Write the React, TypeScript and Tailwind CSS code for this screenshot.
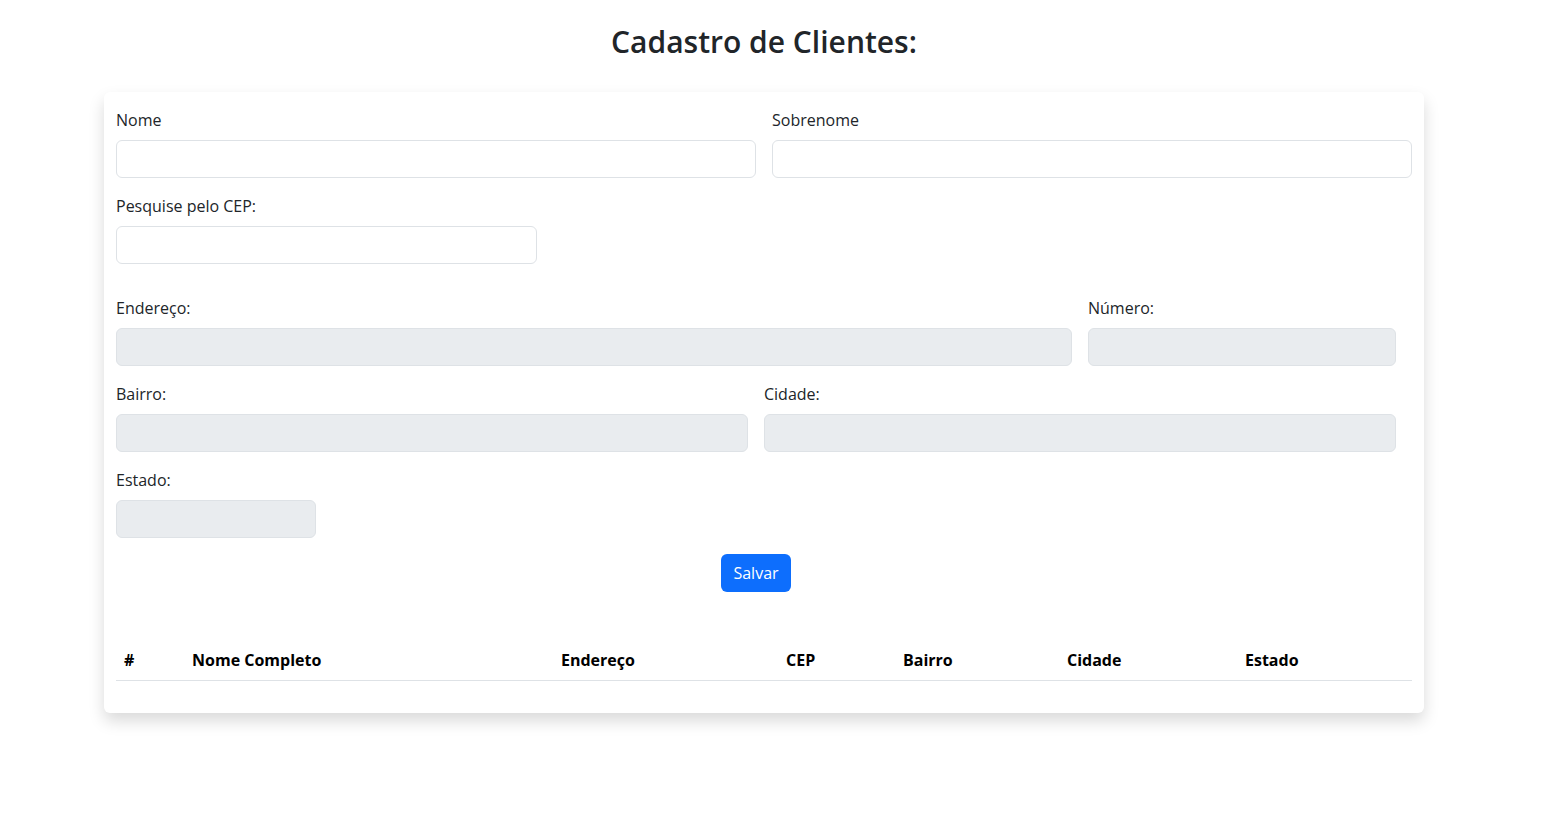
import React from "react";

const font = { fontFamily: '"Open Sans", "Noto Sans", Arial, sans-serif' };

function Field({ label, width, disabled }: { label: string; width: string; disabled?: boolean }) {
  return (
    <div className={`flex flex-col ${width}`}>
      <label className="mb-2 text-[16px] leading-6 text-[#212529]">{label}</label>
      <input
        disabled={disabled}
        className={`h-[38px] w-full rounded-[6px] border border-[#dee2e6] px-3 outline-none ${
          disabled ? "bg-[#e9ecef]" : "bg-white"
        }`}
      />
    </div>
  );
}

const cols = [
  { t: "#", w: "w-[68px]" },
  { t: "Nome Completo", w: "w-[369px]" },
  { t: "Endereço", w: "w-[225px]" },
  { t: "CEP", w: "w-[117px]" },
  { t: "Bairro", w: "w-[164px]" },
  { t: "Cidade", w: "w-[178px]" },
  { t: "Estado", w: "w-[175px]" },
];

export default function App() {
  return (
    <div className="min-h-[813px] bg-white text-[#212529]" style={font}>
      <div className="w-[1528px]">
        <h2 className="pt-[22px] text-center text-[30px] font-semibold leading-[40px]">Cadastro de Clientes:</h2>
        <div className="mx-auto mt-[30px] w-[1320px] rounded-[6px] bg-white px-3 pt-4 pb-8 shadow-[0_8px_16px_rgba(0,0,0,0.15)]">
          <div className="flex gap-4">
            <Field label="Nome" width="w-[640px]" />
            <Field label="Sobrenome" width="w-[640px]" />
          </div>
          <div className="mt-4 flex">
            <Field label="Pesquise pelo CEP:" width="w-[421px]" />
          </div>
          <div className="mt-8 flex gap-4">
            <Field label="Endereço:" width="w-[956px]" disabled />
            <Field label="Número:" width="w-[308px]" disabled />
          </div>
          <div className="mt-4 flex gap-4">
            <Field label="Bairro:" width="w-[632px]" disabled />
            <Field label="Cidade:" width="w-[632px]" disabled />
          </div>
          <div className="mt-4 flex">
            <Field label="Estado:" width="w-[200px]" disabled />
          </div>
          <div className="mt-4 flex w-[1280px] justify-center">
            <button className="h-[38px] rounded-[6px] bg-[#0d6efd] px-3 text-[16px] text-white">Salvar</button>
          </div>
          <table className="mt-12 w-full border-collapse">
            <thead>
              <tr className="border-b border-[#dee2e6]">
                {cols.map((c) => (
                  <th key={c.t} className={`${c.w} p-2 text-left text-[16px] font-bold leading-6 text-black`}>
                    {c.t}
                  </th>
                ))}
              </tr>
            </thead>
            <tbody></tbody>
          </table>
        </div>
      </div>
    </div>
  );
}
